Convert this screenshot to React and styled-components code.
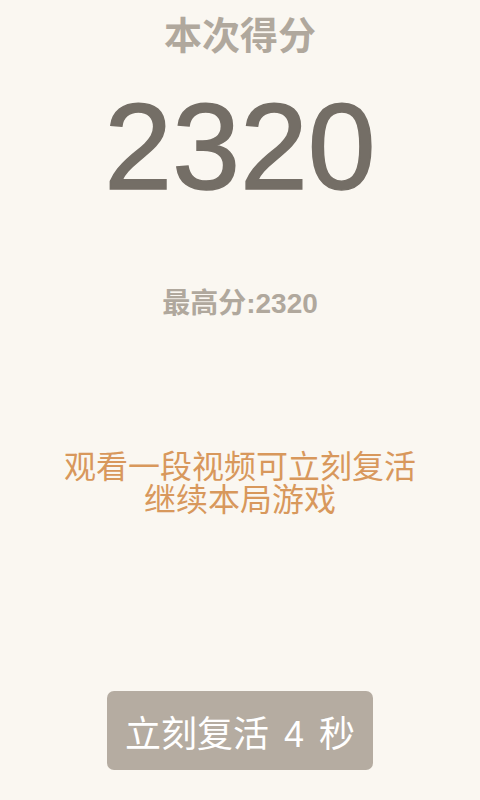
import React from "react";
import styled, { createGlobalStyle } from "styled-components";

const Global = createGlobalStyle`
  html, body { margin: 0; padding: 0; background: #faf7f1; }
  body { font-family: "Liberation Sans", "Noto Sans CJK SC", sans-serif; }
`;

const Page = styled.div`
  width: 480px;
  height: 800px;
  display: flex;
  flex-direction: column;
  align-items: center;
  background: #faf7f1;
  box-sizing: border-box;
  padding-top: 13px;
`;

const Title = styled.div`
  font-size: 38px;
  font-weight: 700;
  color: #b0a89d;
  line-height: 46px;
`;

const Score = styled.div`
  margin-top: 27px;
  font-size: 122px;
  line-height: 122px;
  color: #746e66;
  -webkit-text-stroke: 1.5px #746e66;
`;

const Best = styled.div`
  margin-top: 80px;
  font-size: 28px;
  font-weight: 700;
  color: #b0a89d;
  line-height: 32px;
`;

const Hint = styled.div`
  margin-top: 131px;
  font-size: 32px;
  line-height: 33px;
  color: #d8985c;
  text-align: center;
`;

const Spacer = styled.div`
  flex: 1;
`;

const ReviveButton = styled.button`
  width: 266px;
  height: 79px;
  margin-bottom: 30px;
  border: none;
  border-radius: 7px;
  background: #b5aca1;
  color: #ffffff;
  font-family: "Liberation Sans", "Noto Sans CJK SC", sans-serif;
  font-size: 36px;
  word-spacing: 5px;
  padding: 0;
  cursor: pointer;
`;

export default function App() {
  return (
    <>
      <Global />
      <Page>
        <Title>本次得分</Title>
        <Score>2320</Score>
        <Best>最高分:2320</Best>
        <Hint>
          观看一段视频可立刻复活
          <br />
          继续本局游戏
        </Hint>
        <Spacer />
        <ReviveButton>立刻复活 4 秒</ReviveButton>
      </Page>
    </>
  );
}
